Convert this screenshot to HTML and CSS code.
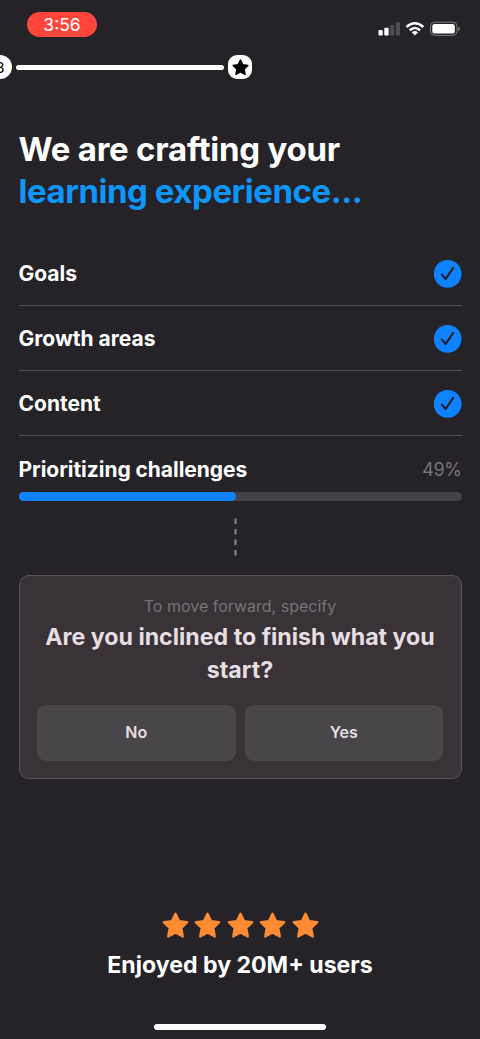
FILE: index.html
```html
<!DOCTYPE html>
<html lang="en">
<head>
<meta charset="utf-8">
<meta name="viewport" content="width=device-width, initial-scale=1">
<title>Learning experience</title>
<link rel="stylesheet" href="styles.css">
</head>
<body>
<svg width="0" height="0" class="defs">
  <symbol id="star" viewBox="0 0 26 26"><path d="M13 1.7 L16.4 8.7 L24.3 9.8 L18.6 15.4 L20 23.6 L13 19.8 L6 23.6 L7.4 15.4 L1.7 9.8 L9.6 8.7 Z" fill="currentColor" stroke="currentColor" stroke-width="2.2" stroke-linejoin="round"/></symbol>
  <symbol id="check" viewBox="0 0 28 29"><circle cx="13.6" cy="14.9" r="13.9" fill="#0f82ff"/><path d="M7.9 15.6 L11.7 20 L19.2 8.8" fill="none" stroke="#211f26" stroke-width="2.1" stroke-linecap="round" stroke-linejoin="round"/></symbol>
</svg>
<div class="screen">
  <header class="status">
    <span class="time">3:56</span>
    <svg class="system" width="84" height="16" viewBox="0 0 84 16">
      <g fill="#fff"><rect x="0.5" y="9" width="4.2" height="5.5" rx="1"/><rect x="6.3" y="6.7" width="4.4" height="7.8" rx="1"/></g>
      <g fill="#504f53"><rect x="12.2" y="4" width="4.1" height="10.5" rx="1"/><rect x="17.9" y="1.2" width="4.1" height="13.3" rx="1"/></g>
      <g fill="none" stroke="#fff" stroke-width="2.5"><path d="M28.5 6 Q36.9 -1.6 45.3 6"/><path d="M31.7 9.3 Q36.9 4.8 42.1 9.3"/></g>
      <path d="M33.8 11.3 Q36.9 8.8 40 11.3 L36.9 14.6 Z" fill="#fff"/>
      <rect x="52.5" y="1.2" width="26.5" height="13.2" rx="4" fill="none" stroke="#7b7a7d"/>
      <rect x="54.3" y="3" width="22.5" height="9.6" rx="2.2" fill="#fff"/>
      <path d="M80.3 5.5 Q82 6 82 7.8 Q82 9.6 80.3 10 Z" fill="#7b7a7d"/>
    </svg>
  </header>
  <div class="steps">
    <span class="step"><span>3</span></span>
    <span class="line"></span>
    <span class="goal"><svg width="17" height="17"><use href="#star"/></svg></span>
  </div>
  <main>
    <h1>We are crafting your<br><span>learning experience...</span></h1>
    <ul class="list">
      <li>Goals<svg width="28" height="29"><use href="#check"/></svg></li>
      <li>Growth areas<svg width="28" height="29"><use href="#check"/></svg></li>
      <li>Content<svg width="28" height="29"><use href="#check"/></svg></li>
    </ul>
    <div class="current"><span>Prioritizing challenges</span><span class="percent">49%</span></div>
    <div class="track"><div class="fill" style="width:49%"></div></div>
    <svg class="dash" width="3" height="38" viewBox="0 0 3 38"><path d="M1.5 0.5V38" stroke="#858387" stroke-width="2.2" stroke-dasharray="5.5 5"/></svg>
    <section class="card">
      <p>To move forward, specify</p>
      <h2>Are you inclined to finish what you start?</h2>
      <div class="answers"><button>No</button><button>Yes</button></div>
    </section>
  </main>
  <footer>
    <div class="stars">
      <svg width="27" height="27"><use href="#star"/></svg><svg width="27" height="27"><use href="#star"/></svg><svg width="27" height="27"><use href="#star"/></svg><svg width="27" height="27"><use href="#star"/></svg><svg width="27" height="27"><use href="#star"/></svg>
    </div>
    <div class="enjoyed">Enjoyed by 20M+ users</div>
    <div class="home"></div>
  </footer>
</div>
</body>
</html>
```
FILE: styles.css
```css
* { box-sizing: border-box; }
body { margin: 0; background: #252327; color: #fff; font-family: Inter, "Liberation Sans", sans-serif; }
svg { display: block; flex: none; }
.defs { position: absolute; }
.screen { width: 480px; height: 1039px; display: flex; flex-direction: column; overflow: hidden; }
.status { height: 55px; padding: 12px 18px 0 27px; display: flex; justify-content: space-between; align-items: flex-start; }
.time { width: 70px; height: 25px; border-radius: 13px; background: #ff453c; font-size: 17.5px; line-height: 25px; text-align: center; }
.system { margin-top: 9px; }
.steps { height: 24px; display: flex; align-items: center; gap: 4px; margin-left: -12px; }
.step, .goal { width: 24px; height: 24px; flex: none; display: flex; align-items: center; justify-content: center; background: #fff; color: #000; }
.step { border-radius: 12px; font-size: 15px; }
.line { width: 208px; height: 5px; border-radius: 3px; background: #fff; }
.goal { border-radius: 9px; }
main { padding: 49px 18.5px 0; display: flex; flex-direction: column; }
h1 { margin: 0; font-size: 33px; line-height: 42px; font-weight: 700; letter-spacing: -0.25px; white-space: nowrap; }
h1 span { color: #0f96fa; letter-spacing: -0.46px; }
.list { list-style: none; margin: 29px 0 0; padding: 0; }
.list li { height: 65px; padding-top: 1px; display: flex; align-items: center; justify-content: space-between; border-bottom: 1px solid #514f53; font-size: 21px; font-weight: 700; }
.current { height: 55.5px; padding-top: 11px; display: flex; align-items: center; justify-content: space-between; font-size: 21px; font-weight: 700; letter-spacing: -0.05px; }
.percent { color: #77757a; font-size: 18px; font-weight: 400; letter-spacing: -0.4px; }
.track { height: 9.5px; border-radius: 5px; background: #434145; }
.fill { height: 100%; border-radius: 5px; background: #0f82ff; }
.dash { margin: 17px 0 19px 215.5px; }
.card { height: 204px; border: 1px solid #595559; border-radius: 10px; background: #393236; padding: 20px 17.5px 0; text-align: center; }
.card p { margin: 0; font-size: 16px; line-height: 20px; color: #777276; }
.card h2 { margin: 5px -4px 0; font-size: 23.2px; line-height: 32.5px; font-weight: 700; color: #e5dfe4; }
.answers { margin-top: 19px; display: grid; grid-template-columns: 1fr 1fr; gap: 9px; }
.answers button { height: 56px; padding: 0 0 2px; border: 0; border-radius: 9px; background: #484649; color: #e5dfe4; font: 600 16px Inter, "Liberation Sans", sans-serif; }
footer { margin-top: auto; height: 127px; display: flex; flex-direction: column; align-items: center; }
.stars { display: flex; gap: 5.5px; color: #ff8b34; }
.enjoyed { margin-top: 11px; font-size: 23.1px; line-height: 30px; font-weight: 700; }
.home { margin-top: 44px; width: 172px; height: 6px; border-radius: 3px; background: #fff; }
```
